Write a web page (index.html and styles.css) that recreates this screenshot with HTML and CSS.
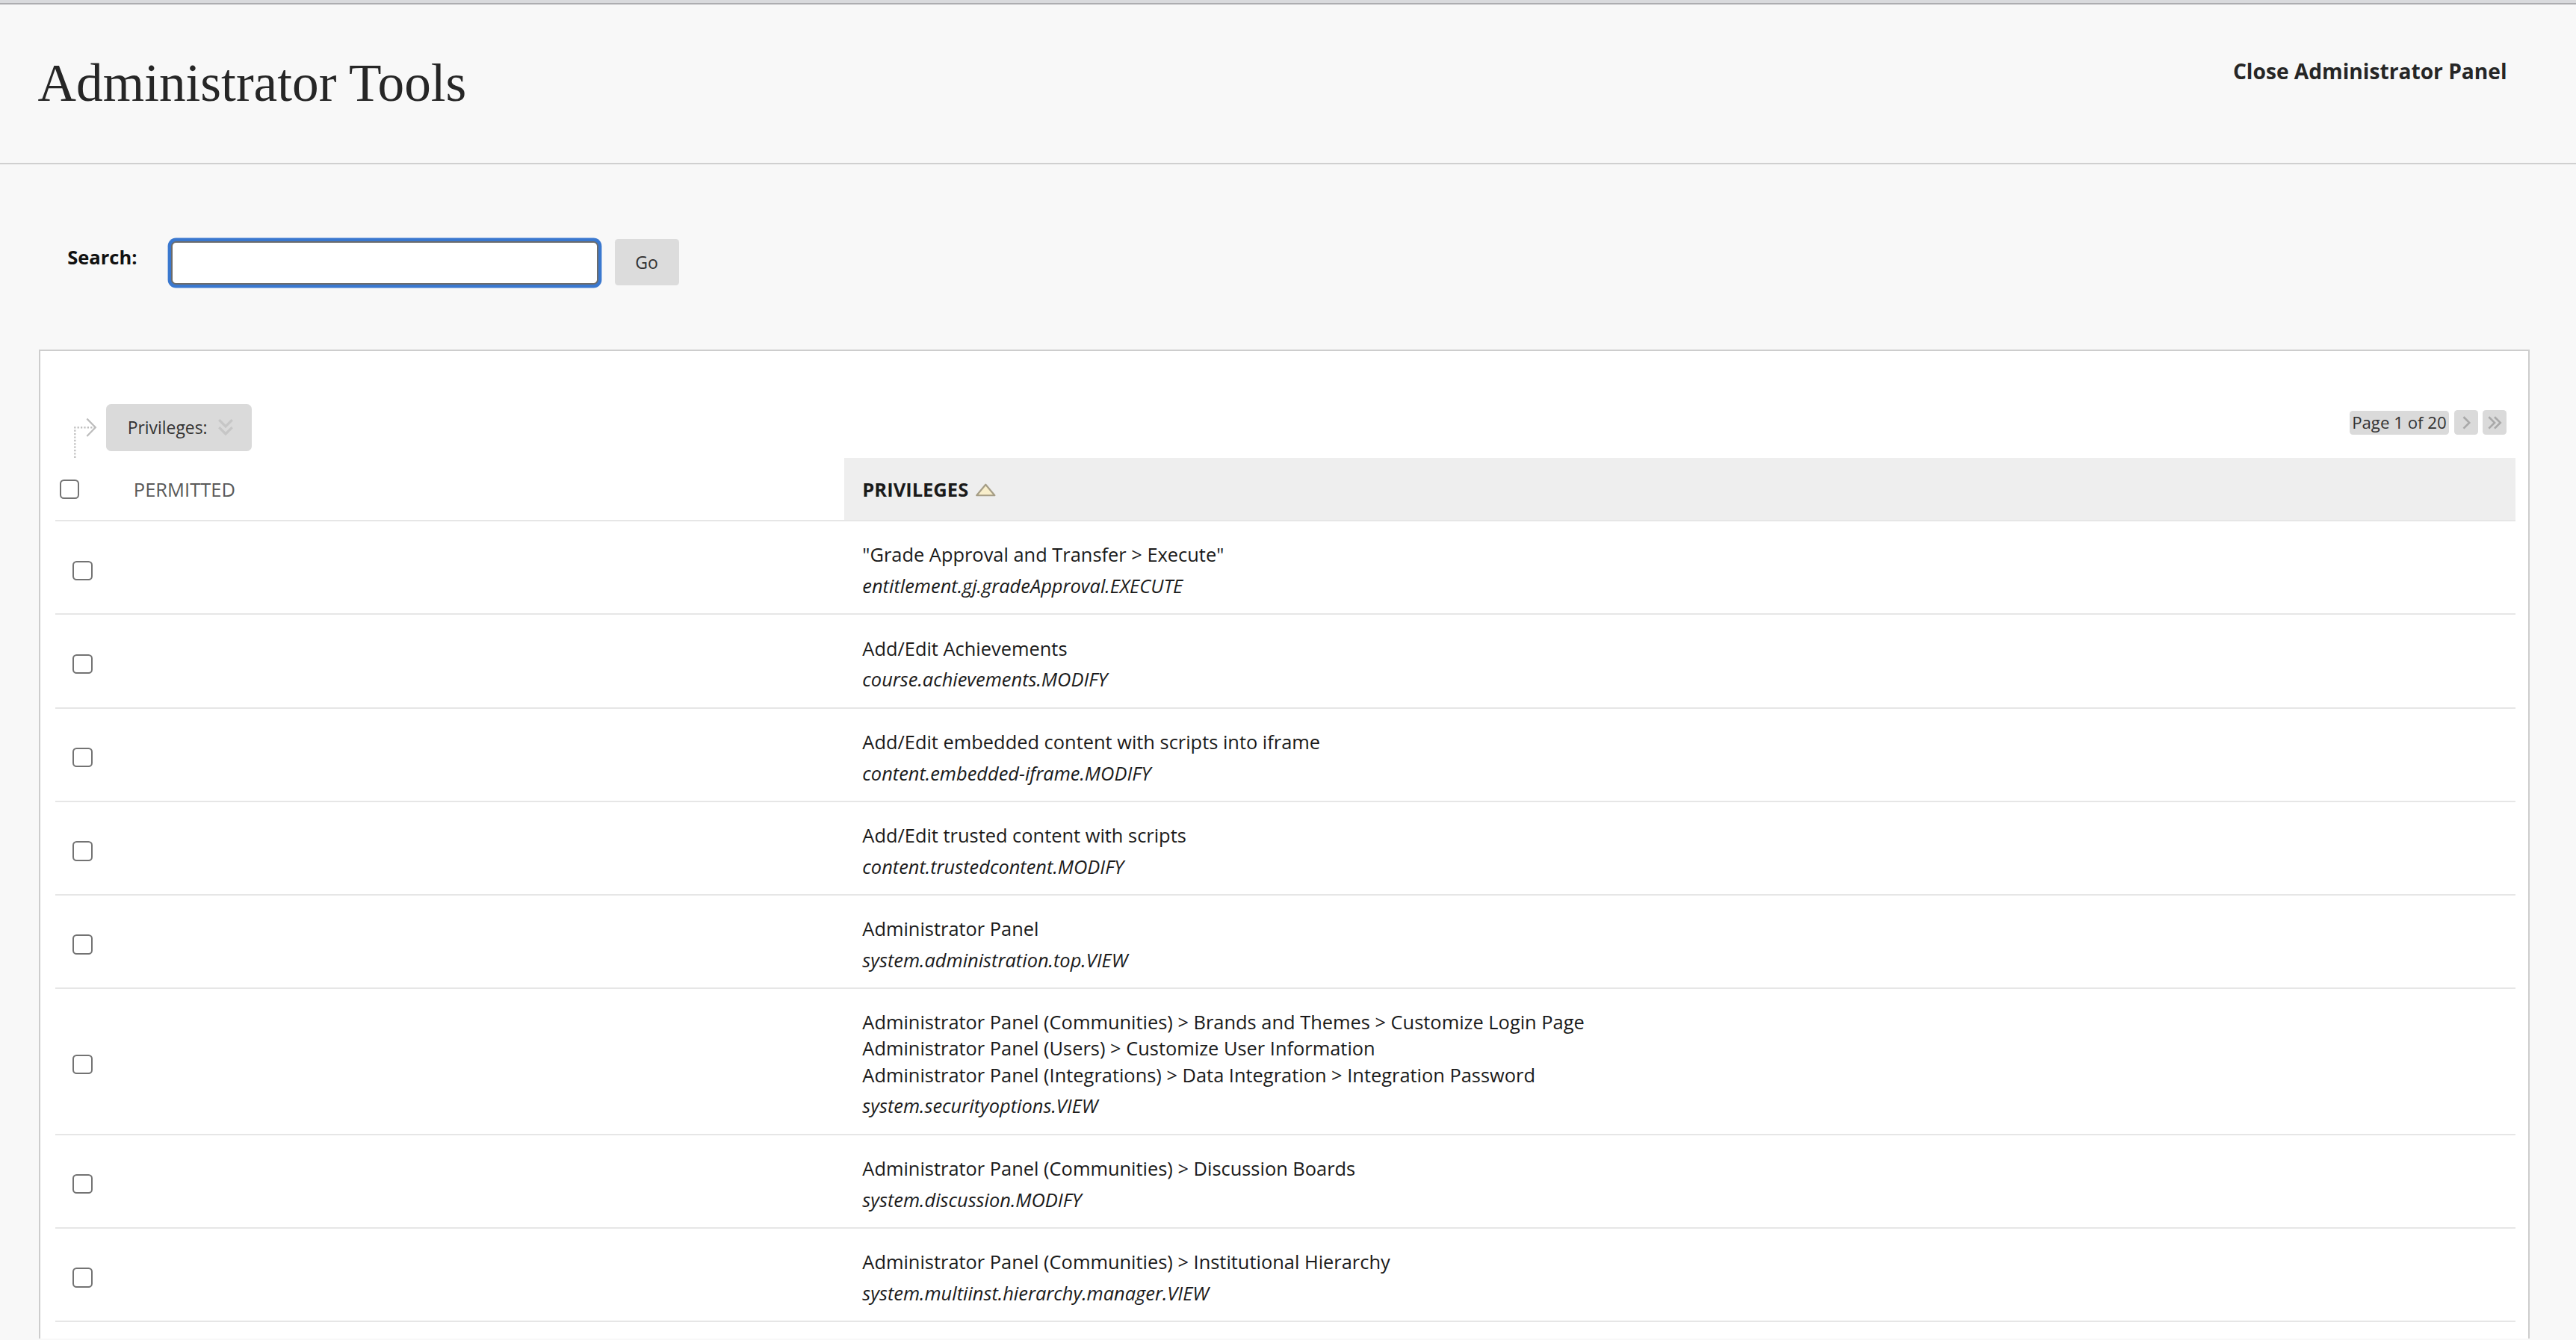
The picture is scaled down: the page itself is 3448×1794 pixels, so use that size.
FILE: index.html
```html
<!DOCTYPE html>
<html lang="en">
<head>
  <meta charset="UTF-8" />
  <title>Administrator Tools</title>
  <link rel="stylesheet" href="styles.css">
</head>
<body>

<div class="topbar"></div>

<div class="page-header">
  <h1>Administrator Tools</h1>
  <a class="close-link" href="#">Close Administrator Panel</a>
</div>

<form class="search-row" onsubmit="return false">
  <label class="search-label" for="search">Search:</label>
  <input type="text" id="search" class="search-input" />
  <button class="go-btn" type="submit">Go</button>
</form>

<div class="panel">
  <div class="toolbar">
    <svg class="bulk-arrow" width="15" height="25" viewBox="0 0 15 25">
      <path d="M1.5 25 V6.5 H13.5" fill="none" stroke="#bcbcbc" stroke-width="1" stroke-dasharray="1 1" />
      <path d="M8.8 1.2 L14 6.5 L8.8 11.8" fill="none" stroke="#bcbcbc" stroke-width="1" />
    </svg>
    <button class="filter-btn">
      Privileges:
      <svg width="10" height="11" viewBox="0 0 10 11">
        <path d="M1 1 L5 5 L9 1 M1 5.5 L5 9.5 L9 5.5" fill="none" stroke="#c6c6c6" stroke-width="1.5" />
      </svg>
    </button>
    <div class="pager">
      <span class="page-count">Page 1 of 20</span>
      <a class="pager-btn" href="#">
        <svg width="8" height="9" viewBox="0 0 8 9"><path d="M2.5 1 L6 4.5 L2.5 8" fill="none" stroke="#a9a9a9" stroke-width="1.2" /></svg>
      </a>
      <a class="pager-btn" href="#">
        <svg width="10" height="9" viewBox="0 0 10 9"><path d="M1.5 1 L5 4.5 L1.5 8 M5 1 L8.5 4.5 L5 8" fill="none" stroke="#a9a9a9" stroke-width="1.2" /></svg>
      </a>
    </div>
  </div>

  <table class="priv-table">
    <colgroup>
      <col class="col-check">
      <col class="col-permitted">
      <col>
    </colgroup>
    <thead>
      <tr>
        <th class="check-head"><input type="checkbox" class="cb" /></th>
        <th class="permitted-head">PERMITTED</th>
        <th class="priv-head">PRIVILEGES<svg class="sort-icon" width="13" height="8" viewBox="0 0 13 8">
            <path d="M1 7.4 L6.5 0.8 L12 7.4 Z" fill="#f8eecb" stroke="#a59d86" stroke-width="1" stroke-linejoin="round" />
          </svg></th>
      </tr>
    </thead>
    <tbody>
      <tr>
        <td class="check-cell"><input type="checkbox" class="cb" /></td>
        <td></td>
        <td class="priv-cell">
          <div class="priv-name">"Grade Approval and Transfer &gt; Execute"</div>
          <div class="priv-key">entitlement.gj.gradeApproval.EXECUTE</div>
        </td>
      </tr>
      <tr>
        <td class="check-cell"><input type="checkbox" class="cb" /></td>
        <td></td>
        <td class="priv-cell">
          <div class="priv-name">Add/Edit Achievements</div>
          <div class="priv-key">course.achievements.MODIFY</div>
        </td>
      </tr>
      <tr>
        <td class="check-cell"><input type="checkbox" class="cb" /></td>
        <td></td>
        <td class="priv-cell">
          <div class="priv-name">Add/Edit embedded content with scripts into iframe</div>
          <div class="priv-key">content.embedded-iframe.MODIFY</div>
        </td>
      </tr>
      <tr>
        <td class="check-cell"><input type="checkbox" class="cb" /></td>
        <td></td>
        <td class="priv-cell">
          <div class="priv-name">Add/Edit trusted content with scripts</div>
          <div class="priv-key">content.trustedcontent.MODIFY</div>
        </td>
      </tr>
      <tr>
        <td class="check-cell"><input type="checkbox" class="cb" /></td>
        <td></td>
        <td class="priv-cell">
          <div class="priv-name">Administrator Panel</div>
          <div class="priv-key">system.administration.top.VIEW</div>
        </td>
      </tr>
      <tr>
        <td class="check-cell"><input type="checkbox" class="cb" /></td>
        <td></td>
        <td class="priv-cell">
          <div class="priv-name">Administrator Panel (Communities) &gt; Brands and Themes &gt; Customize Login Page</div>
          <div class="priv-name">Administrator Panel (Users) &gt; Customize User Information</div>
          <div class="priv-name">Administrator Panel (Integrations) &gt; Data Integration &gt; Integration Password</div>
          <div class="priv-key">system.securityoptions.VIEW</div>
        </td>
      </tr>
      <tr>
        <td class="check-cell"><input type="checkbox" class="cb" /></td>
        <td></td>
        <td class="priv-cell">
          <div class="priv-name">Administrator Panel (Communities) &gt; Discussion Boards</div>
          <div class="priv-key">system.discussion.MODIFY</div>
        </td>
      </tr>
      <tr>
        <td class="check-cell"><input type="checkbox" class="cb" /></td>
        <td></td>
        <td class="priv-cell">
          <div class="priv-name">Administrator Panel (Communities) &gt; Institutional Hierarchy</div>
          <div class="priv-key">system.multiinst.hierarchy.manager.VIEW</div>
        </td>
      </tr>
    </tbody>
  </table>
</div>

</body>
</html>
```

FILE: styles.css
```css
html {
  zoom: 2.2;
}

body {
  margin: 0;
  background: #f8f8f8;
  font-family: 'Open Sans', 'Noto Sans', sans-serif;
  color: #262626;
}

.topbar {
  height: 2px;
  background: #d9dadd;
  border-bottom: 1px solid #adadb0;
}

/* header */

.page-header {
  display: flex;
  justify-content: space-between;
  align-items: flex-start;
  height: 96px;
  padding: 0 42px 0 23px;
  border-bottom: 1px solid #d0d0d0;
}

.page-header h1 {
  margin: 27.6px 0 0;
  font-family: 'Liberation Serif', 'DejaVu Serif', serif;
  font-weight: normal;
  font-size: 32.4px;
  line-height: 40px;
  color: #262626;
}

.close-link {
  margin-top: 31.6px;
  font-size: 12.8px;
  line-height: 18px;
  font-weight: bold;
  color: #262626;
  text-decoration: none;
}

/* search */

.search-row {
  display: flex;
  align-items: flex-start;
  margin: 45px 0 0;
  padding-left: 41px;
}

.search-label {
  width: 63px;
  margin-top: 3.8px;
  font-size: 11.6px;
  line-height: 16px;
  font-weight: bold;
  color: #111;
}

.search-input {
  box-sizing: border-box;
  width: 260px;
  height: 26.5px;
  margin: 2px 0 0;
  padding: 0 6px;
  border: 1px solid #6b6b6b;
  border-radius: 3px;
  background: #fff;
  box-shadow: 0 0 0 2px #3a78cf;
  outline: none;
}

.go-btn {
  width: 39px;
  height: 28px;
  margin: 0.8px 0 0 10px;
  padding: 0;
  border: none;
  border-radius: 2px;
  background: #dcdcdc;
  font-family: 'Open Sans', sans-serif;
  font-size: 10.5px;
  color: #333;
}

/* list panel */

.panel {
  margin: 39.1px 28px 0 23.7px;
  padding: 0 8px 10px 9px;
  background: #fff;
  border: 1px solid #cdcdcd;
  border-bottom: none;
}

.toolbar {
  display: flex;
  align-items: flex-start;
  padding-top: 32.5px;
}

.bulk-arrow {
  display: block;
  margin: 7.6px 0 0 10.3px;
}

.filter-btn {
  display: flex;
  align-items: center;
  box-sizing: border-box;
  width: 89px;
  height: 28.3px;
  margin-left: 5.5px;
  padding: 0 0 0 13.2px;
  border: none;
  border-radius: 3px;
  background: #dadada;
  font-family: 'Open Sans', sans-serif;
  font-size: 10.4px;
  color: #333;
}

.filter-btn svg {
  margin-left: 6px;
}

.pager {
  display: flex;
  align-items: center;
  gap: 3px;
  margin: 3.6px 5.2px 0 auto;
}

.page-count {
  padding: 0 1.5px;
  border-radius: 2px;
  background: #dadada;
  font-size: 10.1px;
  line-height: 14.5px;
  color: #333;
}

.pager-btn {
  display: flex;
  align-items: center;
  justify-content: center;
  width: 14.6px;
  height: 15px;
  border-radius: 2px;
  background: #dadada;
}

/* table */

.priv-table {
  width: 100%;
  table-layout: fixed;
  border-collapse: separate;
  border-spacing: 0;
}

.col-check {
  width: 36.7px;
}

.col-permitted {
  width: 443.2px;
}

.priv-table th {
  height: 37.8px;
  padding: 0;
  text-align: left;
  vertical-align: middle;
  border-bottom: 1px solid #e6e6e6;
  font-size: 11.6px;
}

.check-head {
  padding-left: 2.6px !important;
}

.permitted-head {
  padding-left: 11px !important;
  font-weight: normal;
  color: #595959;
}

.priv-head {
  padding-left: 11.2px !important;
  background: #eeeeee;
  font-weight: bold;
  color: #1a1a1a;
}

.sort-icon {
  margin-left: 4.2px;
}

.cb {
  appearance: none;
  display: block;
  box-sizing: border-box;
  width: 12px;
  height: 12px;
  margin: 0;
  border: 1px solid #737373;
  border-radius: 2.5px;
  background: #fff;
}

.priv-table td {
  padding: 12.3px 0 8.7px;
  vertical-align: middle;
  border-bottom: 1px solid #e6e6e6;
}

.check-cell {
  padding-left: 10.6px !important;
}

.priv-cell {
  padding-left: 11.2px !important;
  font-size: 11.55px;
  line-height: 16px;
  color: #1a1a1a;
}

.priv-key {
  margin-top: 3px;
  font-style: italic;
}
```
